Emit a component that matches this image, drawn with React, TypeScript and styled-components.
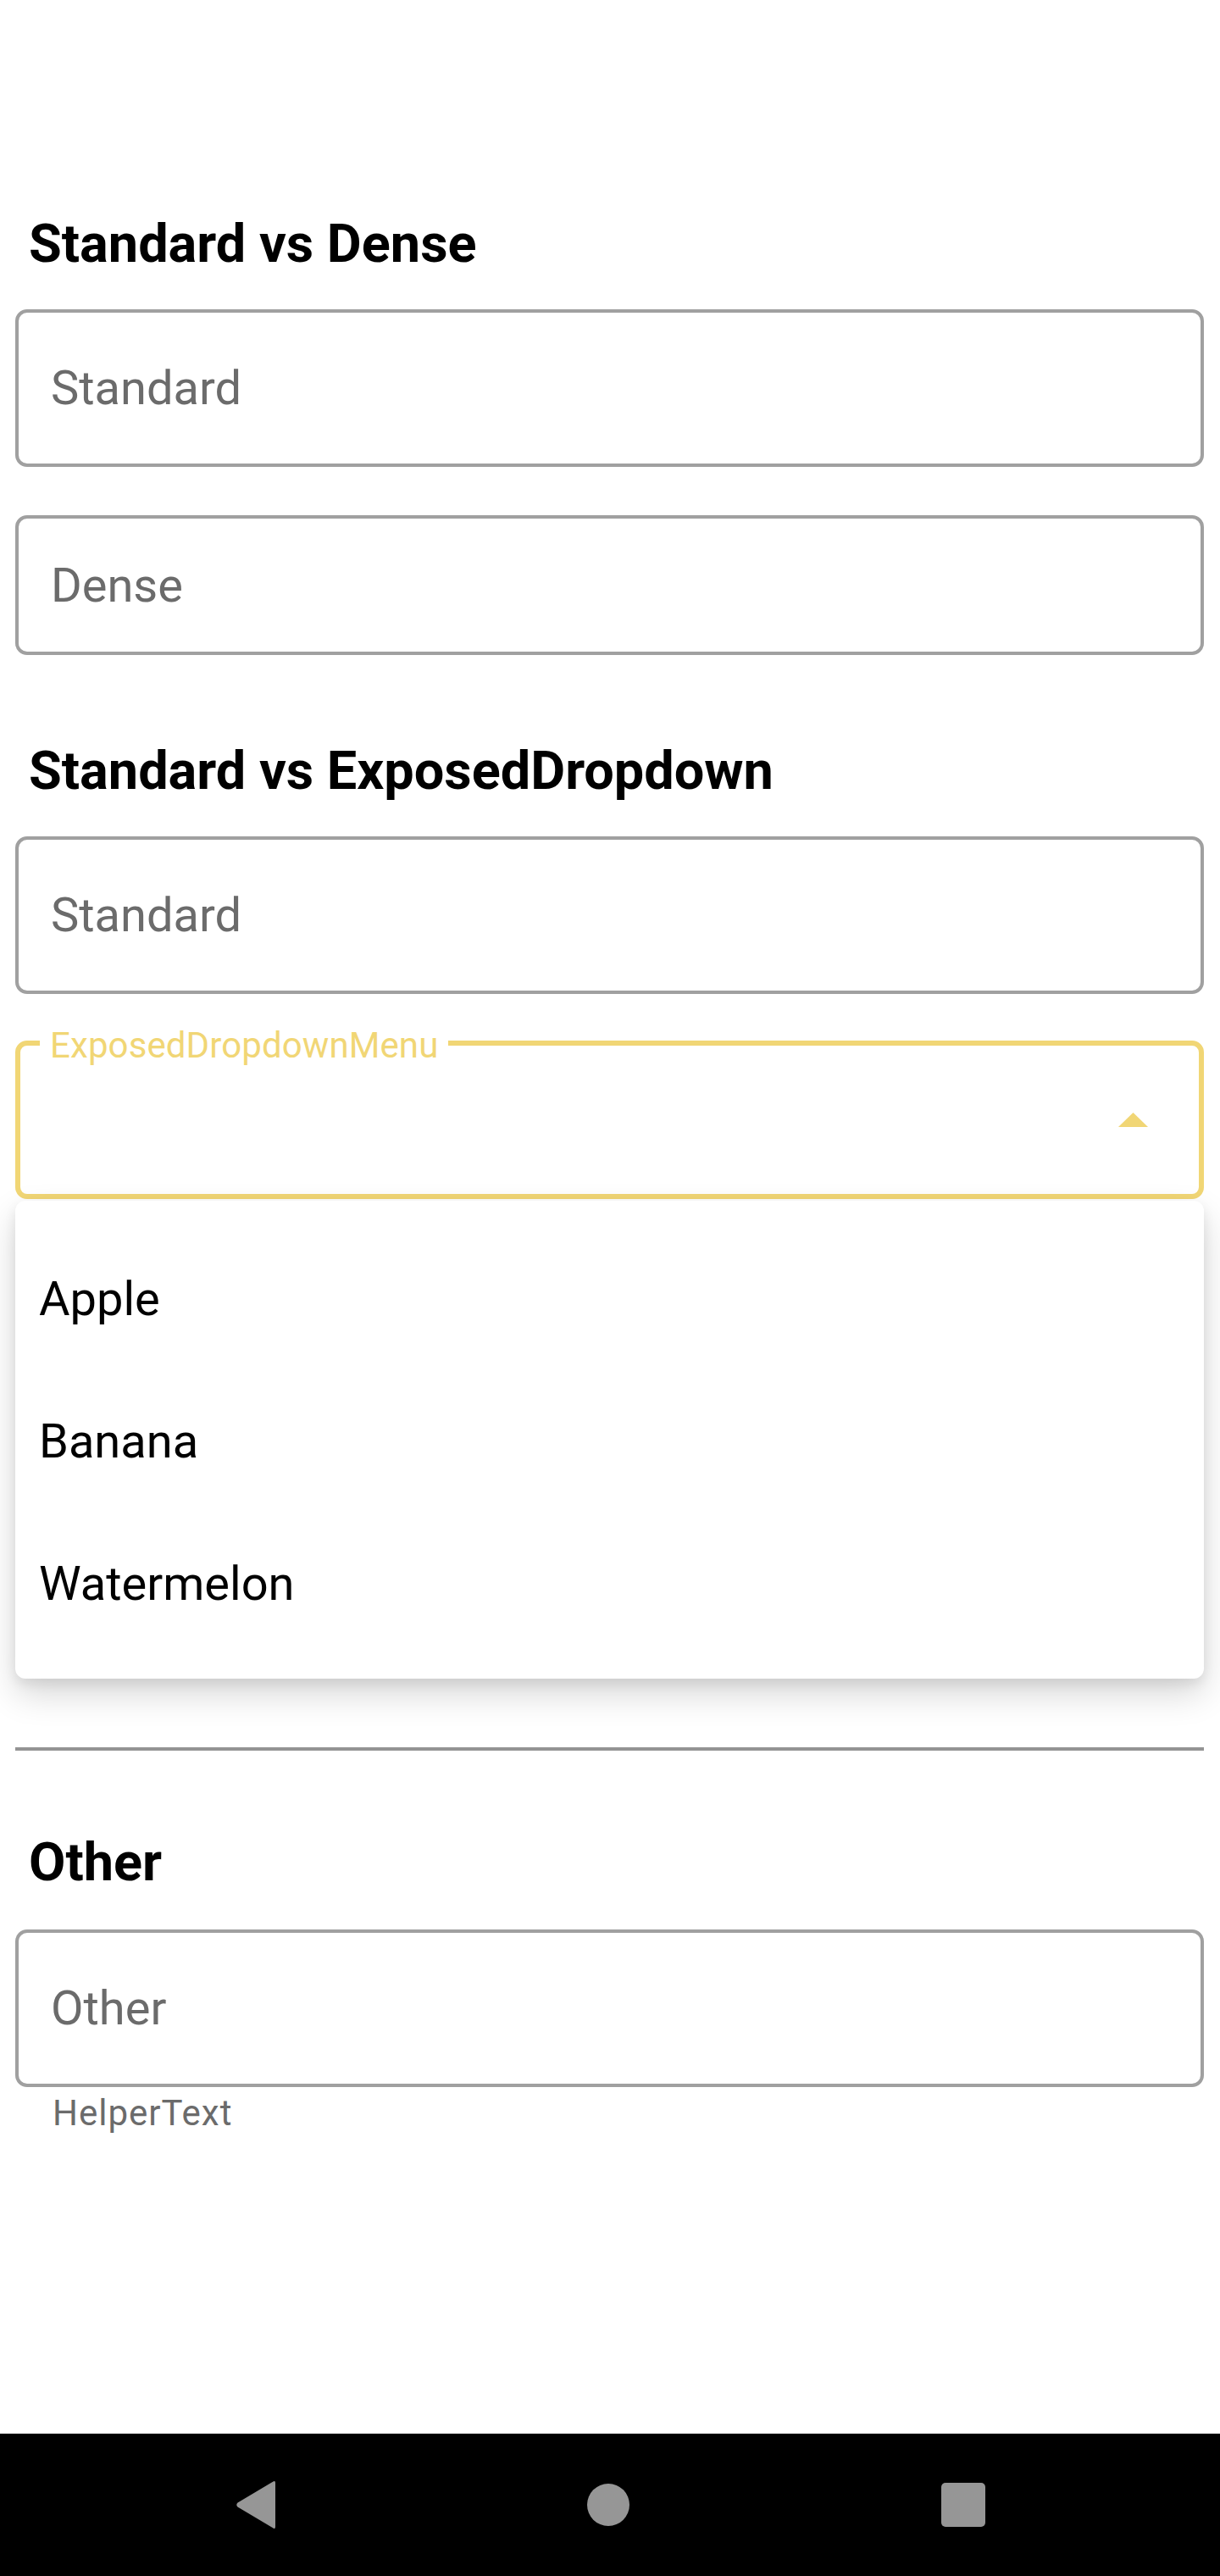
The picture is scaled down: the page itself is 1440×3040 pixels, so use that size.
import React from "react";
import styled, { createGlobalStyle } from "styled-components";

const GlobalStyle = createGlobalStyle`
  html, body {
    margin: 0;
    padding: 0;
    background: #ffffff;
  }
  body {
    font-family: Roboto, "Noto Sans", "Liberation Sans", sans-serif;
    -webkit-font-smoothing: antialiased;
  }
  * { box-sizing: border-box; }
`;

const ACCENT = "#f1d675";

const Page = styled.div`
  width: 1440px;
  min-height: 3040px;
  display: flex;
  flex-direction: column;
  background: #ffffff;
`;

const Main = styled.main`
  flex: 1;
  display: flex;
  flex-direction: column;
  padding: 248px 19px 0 18px;
`;

const Heading = styled.h2<{ $top?: number; $bottom?: number }>`
  margin: ${(p) => p.$top ?? 0}px 0 ${(p) => p.$bottom ?? 37}px 0;
  padding-left: 16px;
  font-size: 63px;
  line-height: 80px;
  font-weight: 700;
  color: #000000;
`;

const Field = styled.div<{ $height: number; $top?: number }>`
  height: ${(p) => p.$height}px;
  margin-top: ${(p) => p.$top ?? 0}px;
  border: 4px solid #a0a0a0;
  border-radius: 14px;
  display: flex;
  align-items: center;
  padding: 0 38px;
`;

const Placeholder = styled.span`
  font-size: 56px;
  color: #6b6b6b;
`;

const Dropdown = styled.div`
  position: relative;
  height: 187px;
  margin-top: 55px;
  border: 6px solid ${ACCENT};
  border-radius: 14px;
  display: flex;
  align-items: center;
  justify-content: flex-end;
  padding-right: 60px;
`;

const FloatingLabel = styled.span`
  position: absolute;
  top: -21px;
  left: 23px;
  padding: 0 12px;
  background: #ffffff;
  font-size: 42px;
  line-height: 42px;
  letter-spacing: 0.1px;
  color: ${ACCENT};
`;

const Arrow = styled.svg`
  width: 35px;
  height: 17px;
  display: block;
`;

const Menu = styled.ul`
  position: absolute;
  top: calc(100% + 8px);
  left: -6px;
  right: -6px;
  margin: 0;
  padding: 32px 0 28px;
  list-style: none;
  background: #ffffff;
  border-radius: 12px;
  box-shadow: 0 18px 40px rgba(0, 0, 0, 0.16), 0 6px 14px rgba(0, 0, 0, 0.08);
  z-index: 5;
`;

const MenuItem = styled.li`
  height: 168px;
  display: flex;
  align-items: center;
  padding-left: 28px;
  font-size: 56px;
  color: #000000;
`;

const Divider = styled.hr`
  margin: 647px 0 0 0;
  border: none;
  height: 4px;
  background: #949494;
`;

const Helper = styled.div`
  margin-top: 6px;
  padding-left: 44px;
  font-size: 42px;
  line-height: 50px;
  color: #6b6b6b;
  letter-spacing: 1px;
`;

const NavBar = styled.nav`
  height: 168px;
  background: #000000;
  display: flex;
  align-items: center;
  justify-content: center;
  gap: 368px;
`;

const NavIcon = styled.svg`
  display: block;
  fill: #969696;
`;

const fruits = ["Apple", "Banana", "Watermelon"];

export default function App() {
  return (
    <>
      <GlobalStyle />
      <Page>
        <Main>
          <Heading>Standard vs Dense</Heading>
          <Field $height={186}>
            <Placeholder>Standard</Placeholder>
          </Field>
          <Field $height={165} $top={57}>
            <Placeholder>Dense</Placeholder>
          </Field>

          <Heading $top={97}>Standard vs ExposedDropdown</Heading>
          <Field $height={186}>
            <Placeholder>Standard</Placeholder>
          </Field>
          <Dropdown>
            <FloatingLabel>ExposedDropdownMenu</FloatingLabel>
            <Arrow viewBox="0 0 35 17">
              <polygon points="0,17 17.5,0 35,17" fill={ACCENT} />
            </Arrow>
            <Menu>
              {fruits.map((f) => (
                <MenuItem key={f}>{f}</MenuItem>
              ))}
            </Menu>
          </Dropdown>

          <Divider />

          <Heading $top={92} $bottom={39}>Other</Heading>
          <Field $height={186}>
            <Placeholder>Other</Placeholder>
          </Field>
          <Helper>HelperText</Helper>
        </Main>

        <NavBar>
          <NavIcon width="47" height="56" viewBox="0 0 47 56">
            <path d="M47 2 L47 54 Q47 57 44.5 55.5 L2.5 30.5 Q0 28 2.5 25.5 L44.5 0.5 Q47 -1 47 2 Z" />
          </NavIcon>
          <NavIcon width="50" height="50" viewBox="0 0 50 50">
            <circle cx="25" cy="25" r="25" />
          </NavIcon>
          <NavIcon width="52" height="52" viewBox="0 0 52 52">
            <rect x="0" y="0" width="52" height="52" rx="5" />
          </NavIcon>
        </NavBar>
      </Page>
    </>
  );
}
